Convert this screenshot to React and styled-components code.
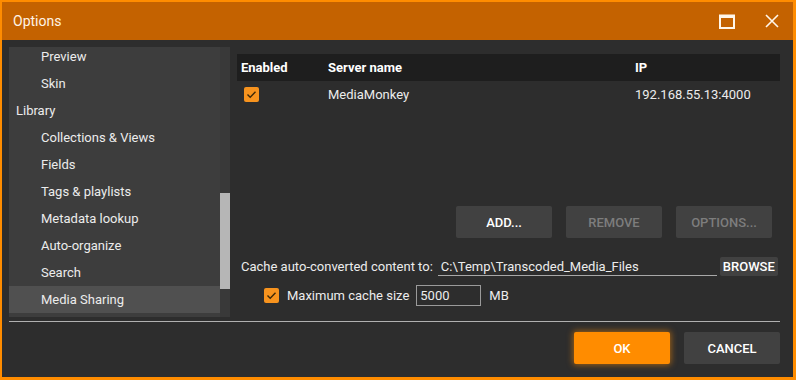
import styled, { createGlobalStyle } from 'styled-components'

const Global = createGlobalStyle`
   html, body { margin: 0; padding: 0; background: #2d2d2d; }
   body { font-family: Roboto, "Liberation Sans", sans-serif; font-size: 13px; color: #ececec; }
`

//창 전체 틀
const Window = styled.div`
   width: 796px;
   height: 380px;
   box-sizing: border-box;
   border-style: solid;
   border-color: #ff8c00;
   border-width: 2px 3px 3px 2px;
   background: #2d2d2d;
   display: flex;
   flex-direction: column;
`

const TitleBar = styled.div`
   height: 38px;
   flex: none;
   background: #c46200;
   display: flex;
   align-items: center;
   padding: 0 14px 0 11px;
   font-size: 14px;
   color: #fff4e6;
`

const Title = styled.div`
   flex: 1;
`

const TitleIcon = styled.svg`
   display: block;
   margin-left: ${(props) => props.gap || '0'};
`

const Body = styled.div`
   flex: 1;
   display: flex;
   flex-direction: column;
   padding: 7px 13px 0 7px;
`

const Main = styled.div`
   height: 270px;
   display: flex;
   gap: 7px;
`

const Sidebar = styled.div`
   width: 221px;
   flex: none;
   background: #3d3d3d;
   display: flex;
   overflow: hidden;
`

const NavList = styled.div`
   flex: 1;
   margin-top: -4px;
`

const NavItem = styled.div`
   height: 27px;
   display: flex;
   align-items: center;
   padding-left: ${(props) => (props.top ? '7px' : '32px')};
   background: ${(props) => (props.active ? '#505050' : 'transparent')};
   color: #ececec;
`

const ScrollTrack = styled.div`
   width: 10px;
   background: #393939;
   display: flex;
   flex-direction: column;
`

const ScrollThumb = styled.div`
   margin-top: 146px;
   height: 96px;
   background: #b6b6b6;
`

const Pane = styled.div`
   flex: 1;
   display: flex;
   flex-direction: column;
   padding-top: 7px;
`

const Grid = styled.div`
   display: grid;
   grid-template-columns: 87px 307px 1fr;
   align-items: center;
   height: 27px;
   padding-left: 4px;
   background: ${(props) => (props.head ? '#1e1e1e' : 'transparent')};
   font-weight: ${(props) => (props.head ? 700 : 400)};
   color: ${(props) => (props.head ? '#ffffff' : '#ececec')};
`

const CheckBox = styled.span`
   width: 15px;
   height: 15px;
   border-radius: 2px;
   background: #f7931e;
   display: inline-flex;
   align-items: center;
   justify-content: center;
   margin-left: ${(props) => props.indent || '0'};
`

const ButtonRow = styled.div`
   display: flex;
   justify-content: flex-end;
   gap: 14px;
   padding-right: 8px;
   margin-top: 98px;
`

const Button = styled.div`
   width: 96px;
   height: 32px;
   border-radius: 2px;
   display: flex;
   align-items: center;
   justify-content: center;
   font-weight: 500;
   background: ${(props) => (props.primary ? '#ff8c00' : '#414141')};
   color: ${(props) => (props.disabled ? '#7d7d7d' : '#ffffff')};
   box-shadow: ${(props) => (props.primary ? '0 0 6px 1px rgba(255, 140, 0, 0.55)' : 'none')};
`

const CacheRow = styled.div`
   display: flex;
   align-items: center;
   height: 19px;
   margin-top: 19px;
   padding-left: 4px;
`

const PathField = styled.div`
   width: 279px;
   height: 19px;
   margin-left: 5px;
   padding-left: 3px;
   box-sizing: border-box;
   border-bottom: 1px solid #a8a8a8;
   display: flex;
   align-items: center;
`

const SmallButton = styled.div`
   margin-left: 3px;
   width: 58px;
   height: 19px;
   background: #414141;
   border-radius: 2px;
   display: flex;
   align-items: center;
   justify-content: center;
   font-weight: 500;
   color: #ffffff;
`

const SizeRow = styled.div`
   display: flex;
   align-items: center;
   height: 21px;
   margin-top: 9px;
`

const Label = styled.span`
   margin-left: ${(props) => props.gap || '0'};
`

const SizeField = styled.div`
   width: 65px;
   height: 21px;
   box-sizing: border-box;
   border: 1px solid #9a9a9a;
   margin-left: 7px;
   padding-left: 3px;
   display: flex;
   align-items: center;
`

const Divider = styled.div`
   height: 1px;
   background: #b0b0b0;
   margin-top: 4px;
`

const Footer = styled.div`
   display: flex;
   justify-content: flex-end;
   gap: 14px;
   margin-top: 10px;
`

const Check = () => (
   <svg width="11" height="9" viewBox="0 0 11 9">
      <path d="M1.5 4.5 L4.2 7.2 L9.5 1.8" fill="none" stroke="#3b2708" strokeWidth="1.4" />
   </svg>
)

const navItems = [
   { label: 'Preview' },
   { label: 'Skin' },
   { label: 'Library', top: true },
   { label: 'Collections & Views' },
   { label: 'Fields' },
   { label: 'Tags & playlists' },
   { label: 'Metadata lookup' },
   { label: 'Auto-organize' },
   { label: 'Search' },
   { label: 'Media Sharing', active: true },
]

function App() {
   return (
      <>
         <Global />
         <Window>
            <TitleBar>
               <Title>Options</Title>
               <TitleIcon width="16" height="15" viewBox="0 0 16 15">
                  <rect x="1" y="1.5" width="14" height="12.5" fill="none" stroke="#fff6ea" strokeWidth="2" />
                  <rect x="1" y="1" width="14" height="3" fill="#fff6ea" />
               </TitleIcon>
               <TitleIcon gap="30px" width="14" height="14" viewBox="0 0 14 14">
                  <path d="M1 1 L13 13 M13 1 L1 13" stroke="#fff6ea" strokeWidth="1.6" />
               </TitleIcon>
            </TitleBar>
            <Body>
               <Main>
                  <Sidebar>
                     <NavList>
                        {navItems.map((item) => (
                           <NavItem key={item.label} top={item.top} active={item.active}>
                              {item.label}
                           </NavItem>
                        ))}
                     </NavList>
                     <ScrollTrack>
                        <ScrollThumb />
                     </ScrollTrack>
                  </Sidebar>
                  <Pane>
                     <Grid head>
                        <span>Enabled</span>
                        <span>Server name</span>
                        <span>IP</span>
                     </Grid>
                     <Grid>
                        <span>
                           <CheckBox indent="3px">
                              <Check />
                           </CheckBox>
                        </span>
                        <span>MediaMonkey</span>
                        <span>192.168.55.13:4000</span>
                     </Grid>
                     <ButtonRow>
                        <Button>ADD...</Button>
                        <Button disabled>REMOVE</Button>
                        <Button disabled>OPTIONS...</Button>
                     </ButtonRow>
                     <CacheRow>
                        <span>Cache auto-converted content to:</span>
                        <PathField>C:\Temp\Transcoded_Media_Files</PathField>
                        <SmallButton>BROWSE</SmallButton>
                     </CacheRow>
                     <SizeRow>
                        <CheckBox indent="27px">
                           <Check />
                        </CheckBox>
                        <Label gap="8px">Maximum cache size</Label>
                        <SizeField>5000</SizeField>
                        <Label gap="8px">MB</Label>
                     </SizeRow>
                  </Pane>
               </Main>
               <Divider />
               <Footer>
                  <Button primary>OK</Button>
                  <Button>CANCEL</Button>
               </Footer>
            </Body>
         </Window>
      </>
   )
}

export default App
